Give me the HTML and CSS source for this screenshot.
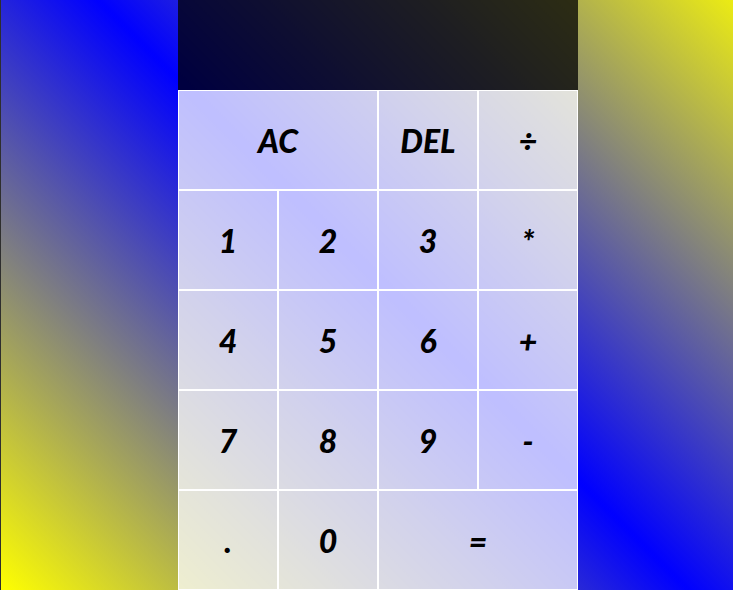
FILE: index.html
```html
<!DOCTYPE html>
<html lang="en">
<head>
<meta charset="utf-8">
<title>Calculator</title>
<link rel="stylesheet" href="styles.css">
</head>
<body>
<div class="calculator-grid">
  <div class="output">
    <div class="previous-operand"></div>
    <div class="current-operand"></div>
  </div>
  <button class="span-two">AC</button>
  <button>DEL</button>
  <button>÷</button>
  <button>1</button>
  <button>2</button>
  <button>3</button>
  <button>*</button>
  <button>4</button>
  <button>5</button>
  <button>6</button>
  <button>+</button>
  <button>7</button>
  <button>8</button>
  <button>9</button>
  <button>-</button>
  <button>.</button>
  <button>0</button>
  <button class="span-two">=</button>
</div>
</body>
</html>
```
FILE: styles.css
```css
*, *::before, *::after {
  box-sizing: border-box;
}

html {
  background-color: #ffff00;
  background-image: linear-gradient(45deg, #ffff00, #0000ff, #ffff00);
  background-size: 756px 620px;
  background-position: 0 -30px;
  background-repeat: no-repeat;
  box-shadow: inset 1px 0 0 #2e2e2e;
  overflow: hidden;
}

body {
  margin: 0;
  padding: 0;
}

.calculator-grid {
  display: grid;
  grid-template-columns: repeat(4, 100px);
  grid-template-rows: 90px repeat(5, 100px);
  padding-left: 178px;
  height: 590px;
}

.calculator-grid > button {
  font-family: Lato, "Liberation Sans", sans-serif;
  font-size: 32px;
  font-weight: 900;
  font-style: italic;
  color: #000;
  border: 1px solid #fff;
  outline: none;
  padding: 0;
  margin: 0;
  background-color: rgba(255, 255, 255, 0.75);
}

.span-two {
  grid-column: span 2;
}

.output {
  grid-column: 1 / -1;
  background-color: rgba(0, 0, 0, 0.75);
  display: flex;
  flex-direction: column;
  align-items: flex-end;
  justify-content: space-around;
  padding: 10px;
}
```
